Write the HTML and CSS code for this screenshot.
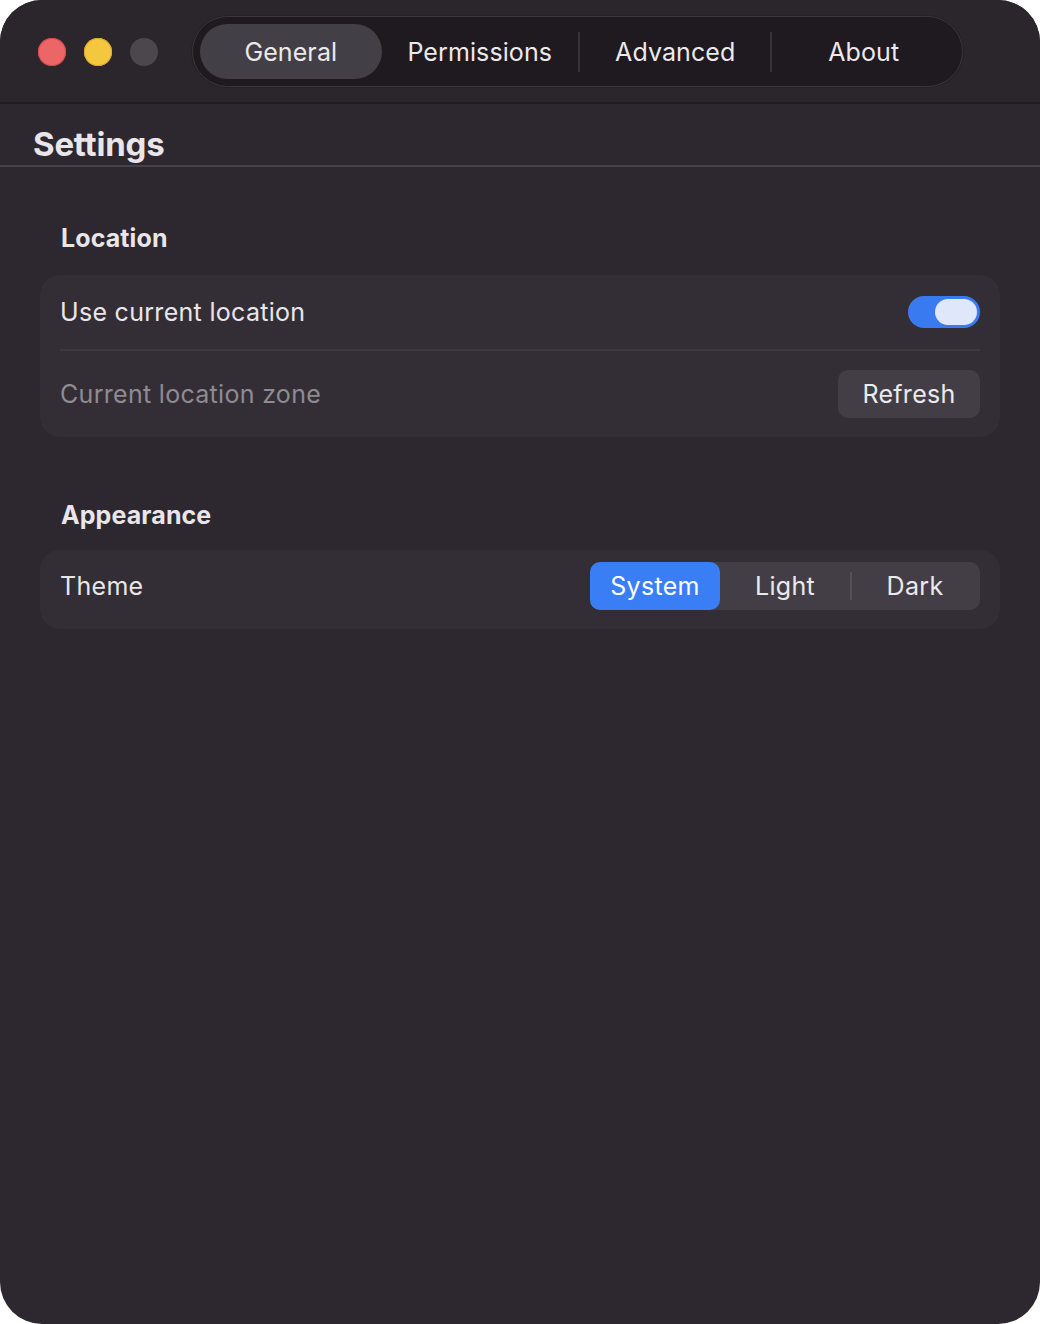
FILE: index.html
```html
<!DOCTYPE html>
<html>
	<head>
		<meta charset="UTF-8">
		<title>Settings</title>
		<link rel="stylesheet" href="styles.css">
	</head>
	<body>
		<div class="window">
			<div class="titlebar">
				<div class="lights">
					<span class="light red"></span>
					<span class="light yellow"></span>
					<span class="light grey"></span>
				</div>
				<div class="tabs">
					<a href="javascript:;" class="tab active">General</a>
					<a href="javascript:;" class="tab">Permissions</a>
					<span class="tab-sep"></span>
					<a href="javascript:;" class="tab">Advanced</a>
					<span class="tab-sep"></span>
					<a href="javascript:;" class="tab">About</a>
				</div>
			</div>
			<div class="header">
				<h1>Settings</h1>
			</div>
			<div class="content">
				<h2>Location</h2>
				<div class="card">
					<div class="row row-top">
						<span class="label">Use current location</span>
						<span class="switch"><span class="knob"></span></span>
					</div>
					<div class="row-line"></div>
					<div class="row">
						<span class="label dim">Current location zone</span>
						<a href="javascript:;" class="btn">Refresh</a>
					</div>
				</div>
				<h2 class="second">Appearance</h2>
				<div class="card">
					<div class="row row-seg">
						<span class="label">Theme</span>
						<div class="seg">
							<a href="javascript:;" class="seg-item on">System</a>
							<a href="javascript:;" class="seg-item">Light</a>
							<span class="seg-sep"></span>
							<a href="javascript:;" class="seg-item">Dark</a>
						</div>
					</div>
				</div>
			</div>
		</div>
	</body>
</html>
```
FILE: styles.css
```css
*{ margin: 0; padding: 0; box-sizing: border-box;}
body{ background: #fff; font-family: Inter, "Liberation Sans", sans-serif; color: #e9e6ea;}
a{ color: inherit; text-decoration: none;}
.window{ width: 1040px; height: 1324px; background: #2d282f; border-radius: 42px; overflow: hidden;}

/* title bar */
.titlebar{ height: 104px; background: #2b262c; border-bottom: 2px solid #1f1b20; display: flex; align-items: flex-start;}
.lights{ display: flex; gap: 18px; padding: 38px 0 0 38px; width: 192px;}
.light{ width: 28px; height: 28px; border-radius: 50%; display: block;}
.red{ background: #ec6567; box-shadow: inset 0 0 0 1px #d6484c;}
.yellow{ background: #f4c83e; box-shadow: inset 0 0 0 1px #d9a92a;}
.grey{ background: #4b474c;}
.tabs{ margin-top: 16px; width: 771px; height: 71px; border-radius: 36px; background: #1e1a1f; border: 1px solid #3b363d; padding: 7px; display: flex; align-items: center; box-shadow: 0 0 0 1px #252126;}
.tab{ font-size: 25px; height: 55px; line-height: 57px; text-align: center; color: #ece9ed; letter-spacing: 0.1px;}
.tab:nth-child(1){ width: 183px;}
.tab:nth-child(2){ width: 198px;}
.tab:nth-child(4){ width: 192px;}
.tab:nth-child(6){ width: 184px;}
.tab.active{ background: #433f46; border-radius: 28px;}
.tab-sep{ width: 2px; height: 40px; background: #38333a;}

/* header */
.header{ height: 63px; border-bottom: 2px solid #48434b; padding: 20px 0 0 33px;}
.header h1{ font-size: 33px; font-weight: 700; line-height: 40px; letter-spacing: -0.2px;}

/* content */
.content{ padding: 55px 40px 0;}
h2{ font-size: 25px; font-weight: 700; line-height: 32px; padding-left: 21px; margin-bottom: 21px; letter-spacing: 0.1px;}
h2.second{ margin-top: 62px; margin-bottom: 19px;}
.card{ background: #332e35; border-radius: 20px; padding: 0 20px;}
.row{ display: flex; align-items: center; justify-content: space-between; padding: 19px 0;}
.row-top{ padding: 21px 0;}
.row-seg{ padding: 12px 0 19px;}
.row-line{ height: 2px; background: #3e393f;}
.label{ font-size: 25px; line-height: 30px; letter-spacing: 0.3px;}
.label.dim{ color: #8f8b91;}
.switch{ width: 72px; height: 32px; border-radius: 16px; background: #3a7af0; display: flex; justify-content: flex-end; align-items: center; padding-right: 3px;}
.knob{ width: 42px; height: 26px; border-radius: 13px; background: #dfe8fb; display: block;}
.btn{ background: #433e46; border-radius: 10px; height: 48px; width: 142px; font-size: 25px; line-height: 48px; text-align: center; color: #ece9ed; letter-spacing: 0.3px;}
.seg{ display: flex; align-items: center; background: #433e46; border-radius: 10px; height: 48px; width: 390px;}
.seg-item{ width: 130px; height: 48px; line-height: 48px; text-align: center; font-size: 25px; color: #ece9ed; letter-spacing: 0.3px;}
.seg-item.on{ background: #3a7ef6; border-radius: 10px; color: #fff;}
.seg-sep{ width: 2px; height: 28px; background: #555058; margin-right: -2px;}
```
